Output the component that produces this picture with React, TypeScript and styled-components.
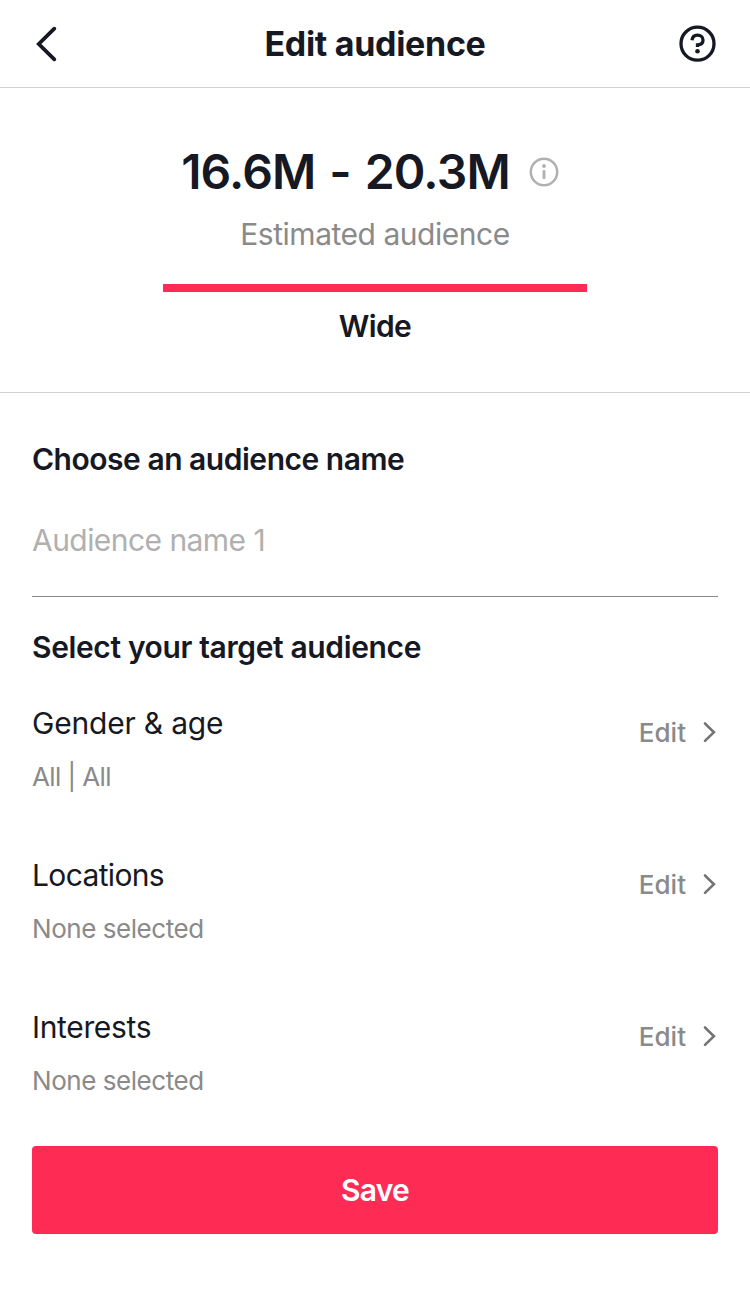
import React from "react";
import styled, { createGlobalStyle } from "styled-components";

const Global = createGlobalStyle`
  * { box-sizing: border-box; }
  body { margin: 0; background: #fff; color: #161823; font-family: Inter, "Liberation Sans", sans-serif; }
`;

const Screen = styled.main`
  width: 750px;
  height: 1294px;
  display: flex;
  flex-direction: column;
  background: #fff;
  overflow: hidden;
`;

const Text = styled.span<{ $size: number; $weight?: number; $color?: string; $track?: number; $line: number }>`
  display: block;
  margin: 0;
  white-space: nowrap;
  font-size: ${p => p.$size}px;
  font-weight: ${p => p.$weight ?? 400};
  color: ${p => p.$color ?? "#161823"};
  letter-spacing: ${p => p.$track ?? 0}px;
  line-height: ${p => p.$line}px;
`;

const RangeText = styled(Text)`
  word-spacing: 2.5px;
`;

const Header = styled.header`
  height: 88px;
  padding: 0 32px;
  display: grid;
  grid-template-columns: 40px 1fr 40px;
  align-items: center;
  justify-items: center;
  border-bottom: 1px solid #d0d0d2;
`;

const IconButton = styled.button`
  width: 40px;
  height: 40px;
  padding: 0;
  border: 0;
  background: none;
  svg { display: block; }
`;

const Estimate = styled.section`
  height: 305px;
  padding-top: 54px;
  display: flex;
  flex-direction: column;
  align-items: center;
  border-bottom: 1px solid #d0d0d2;
`;

const Range = styled.div`
  display: flex;
  align-items: center;
  gap: 19px;
  height: 60px;
  margin: 0 10px 7px 0;
`;

const Meter = styled.div`
  width: 424px;
  height: 8px;
  margin: 25px 0 14px;
  background: #fe2c55;
`;

const Form = styled.section`
  padding: 46px 32px 0;
`;

const NameField = styled.div`
  height: 118px;
  padding-top: 41px;
  margin-bottom: 30px;
  border-bottom: 1px solid #8a8a8c;
`;

const Row = styled.div`
  display: flex;
  justify-content: space-between;
  height: 152px;
  padding-top: 36px;
`;

const RowLabels = styled.div`
  display: flex;
  flex-direction: column;
  gap: 16px;
`;

const EditLink = styled.div`
  display: flex;
  align-items: center;
  gap: 16px;
  height: 36px;
  margin-top: 12px;
`;

const SaveButton = styled.button`
  width: 686px;
  height: 88px;
  margin: 23px 0 0 32px;
  display: flex;
  align-items: center;
  justify-content: center;
  border: 0;
  border-radius: 4px;
  background: #fe2c55;
  font-family: inherit;
`;

const rows = [
  { title: "Gender & age", value: "All | All", titleTrack: -0.2, valueTrack: -0.6 },
  { title: "Locations", value: "None selected", titleTrack: -0.65, valueTrack: -0.45 },
  { title: "Interests", value: "None selected", titleTrack: -0.35, valueTrack: -0.45 },
];

export default function App() {
  return (
    <Screen>
      <Global />
      <Header>
        <IconButton aria-label="Back">
          <svg width="40" height="40" fill="none" stroke="#161823" strokeWidth="3.8" strokeLinecap="round"><path d="M22.3 4.7 6.8 20l15.5 15.3" /></svg>
        </IconButton>
        <Text as="h1" $size={34} $weight={700} $track={-0.3} $line={44}>Edit audience</Text>
        <IconButton aria-label="Help">
          <svg width="40" height="40" fill="none" stroke="#161823" strokeWidth="3.3"><circle cx="19.5" cy="19.7" r="16.5" /><path d="M14 16.2c.4-3.2 2.6-5 5.5-5 3.1 0 5.5 2 5.5 4.8 0 3.4-2.5 4.8-5.5 4.8v2.2" /><circle cx="19.5" cy="27.2" r="2.3" fill="#161823" stroke="none" /></svg>
        </IconButton>
      </Header>
      <Estimate>
        <Range>
          <RangeText $size={48} $weight={600} $track={-0.8} $line={60}>16.6M - 20.3M</RangeText>
          <svg width="30" height="30" fill="none" stroke="#b0b0b0" strokeWidth="2.5"><circle cx="15" cy="15" r="13.2" /><path d="M15 13.2v8.6" strokeWidth="2.9" /><circle cx="15" cy="9" r="1.9" fill="#b0b0b0" stroke="none" /></svg>
        </Range>
        <Text $size={30} $color="#8a8a8a" $track={-0.47} $line={50}>Estimated audience</Text>
        <Meter />
        <Text $size={30} $weight={600} $track={-0.6} $line={40}>Wide</Text>
      </Estimate>
      <Form>
        <Text as="h2" $size={30} $weight={600} $track={-0.48} $line={40}>Choose an audience name</Text>
        <NameField><Text $size={30} $color="#b0b0b0" $track={-0.55} $line={40}>Audience name 1</Text></NameField>
        <Text as="h2" $size={30} $weight={600} $track={-0.37} $line={40}>Select your target audience</Text>
        {rows.map(r => (
          <Row key={r.title}>
            <RowLabels>
              <Text $size={30} $track={r.titleTrack} $line={40}>{r.title}</Text>
              <Text $size={26} $color="#8a8a8a" $track={r.valueTrack} $line={36}>{r.value}</Text>
            </RowLabels>
            <EditLink>
              <Text $size={26} $weight={500} $color="#8a8a8a" $line={36}>Edit</Text>
              <svg width="16" height="24" fill="none" stroke="#757575" strokeWidth="2.6" strokeLinecap="round"><path d="m3 2.5 8.9 8.7L3 19.9" /></svg>
            </EditLink>
          </Row>
        ))}
      </Form>
      <SaveButton><Text $size={30} $weight={600} $color="#fff" $track={-0.8} $line={40}>Save</Text></SaveButton>
    </Screen>
  );
}
